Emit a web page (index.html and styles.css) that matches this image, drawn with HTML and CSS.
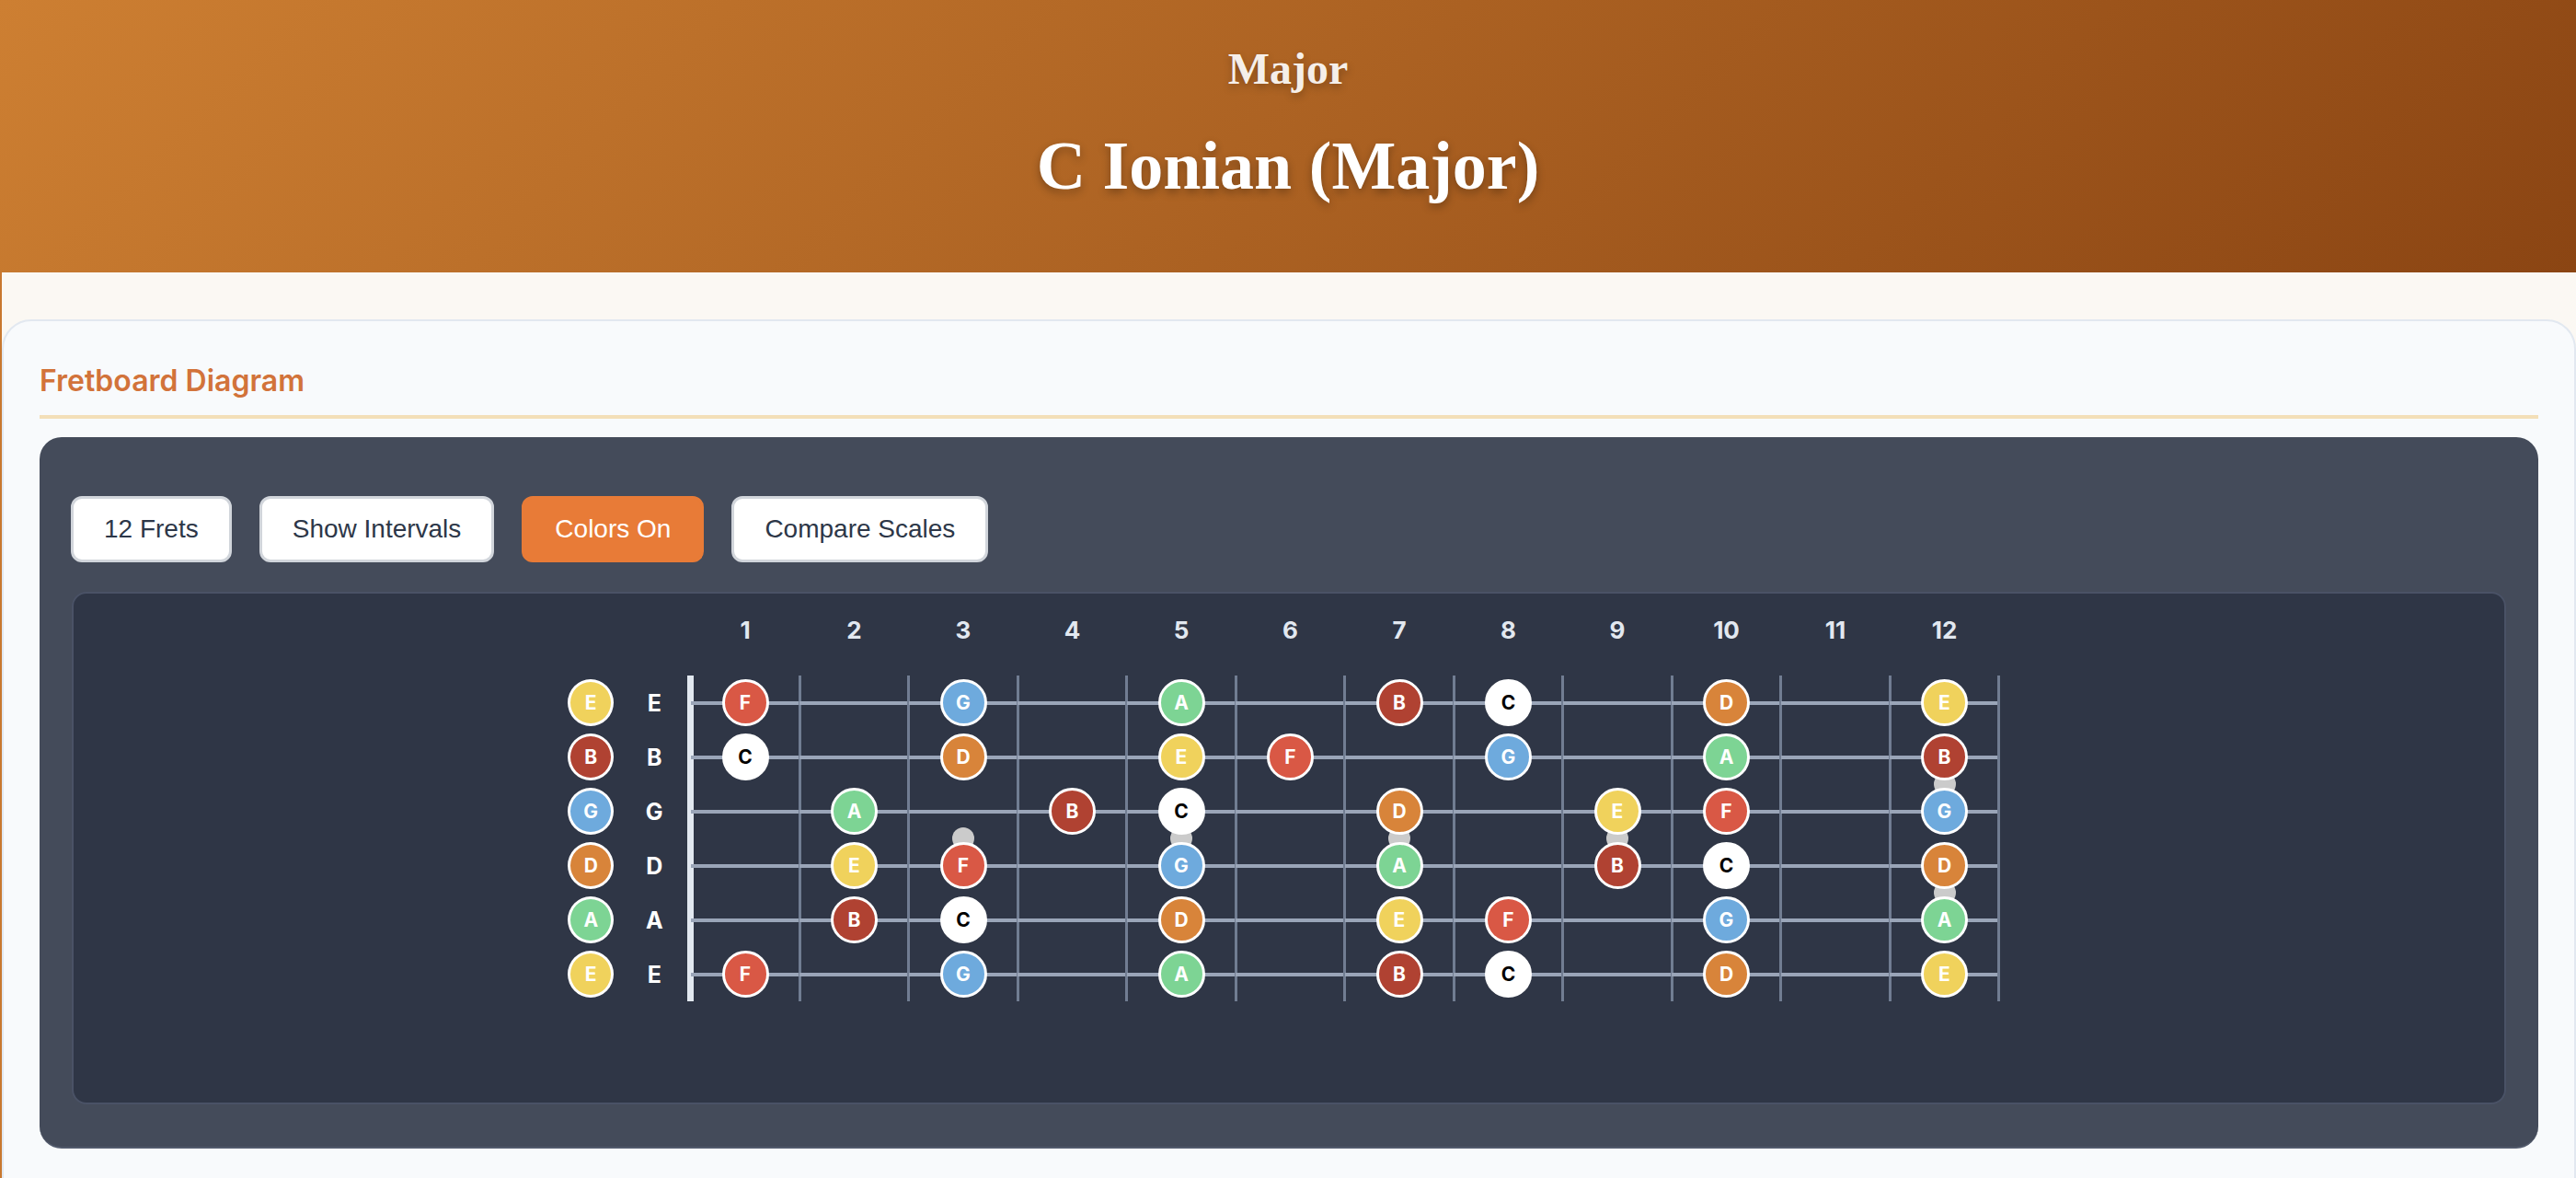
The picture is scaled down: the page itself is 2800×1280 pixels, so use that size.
FILE: index.html
```html
<!DOCTYPE html>
<html lang="en">
<head>
<meta charset="utf-8">
<title>C Ionian (Major)</title>
<link rel="stylesheet" href="styles.css">
</head>
<body>
<header class="hero">
  <div class="hero-sub">Major</div>
  <h1 class="hero-title">C Ionian (Major)</h1>
</header>
<main class="main">
  <section class="card">
    <h2 class="card-title">Fretboard Diagram</h2>
    <div class="panel">
      <div class="controls">
        <button class="btn">12 Frets</button>
        <button class="btn">Show Intervals</button>
        <button class="btn btn-active">Colors On</button>
        <button class="btn">Compare Scales</button>
      </div>
      <div class="board-wrap">
        <div class="fretboard">
          <div class="open-col">
            <div class="slot"><span class="note n-e">E</span></div>
            <div class="slot"><span class="note n-b">B</span></div>
            <div class="slot"><span class="note n-g">G</span></div>
            <div class="slot"><span class="note n-d">D</span></div>
            <div class="slot"><span class="note n-a">A</span></div>
            <div class="slot"><span class="note n-e">E</span></div>
          </div>
          <div class="label-col">
            <div class="slot">E</div>
            <div class="slot">B</div>
            <div class="slot">G</div>
            <div class="slot">D</div>
            <div class="slot">A</div>
            <div class="slot">E</div>
          </div>
          <div class="neck">
            <div class="fret-nums">
              <span>1</span><span>2</span><span>3</span><span>4</span><span>5</span><span>6</span>
              <span>7</span><span>8</span><span>9</span><span>10</span><span>11</span><span>12</span>
            </div>
            <div class="board">
              <!-- string 1: E -->
              <div class="cell"><span class="note n-f">F</span></div>
              <div class="cell"></div>
              <div class="cell"><span class="note n-g">G</span></div>
              <div class="cell"></div>
              <div class="cell"><span class="note n-a">A</span></div>
              <div class="cell"></div>
              <div class="cell"><span class="note n-b">B</span></div>
              <div class="cell"><span class="note n-c">C</span></div>
              <div class="cell"></div>
              <div class="cell"><span class="note n-d">D</span></div>
              <div class="cell"></div>
              <div class="cell"><span class="note n-e">E</span></div>
              <!-- string 2: B -->
              <div class="cell"><span class="note n-c">C</span></div>
              <div class="cell"></div>
              <div class="cell"><span class="note n-d">D</span></div>
              <div class="cell"></div>
              <div class="cell"><span class="note n-e">E</span></div>
              <div class="cell"><span class="note n-f">F</span></div>
              <div class="cell"></div>
              <div class="cell"><span class="note n-g">G</span></div>
              <div class="cell"></div>
              <div class="cell"><span class="note n-a">A</span></div>
              <div class="cell"></div>
              <div class="cell"><span class="note n-b">B</span><i class="dot"></i></div>
              <!-- string 3: G -->
              <div class="cell"></div>
              <div class="cell"><span class="note n-a">A</span></div>
              <div class="cell"><i class="dot"></i></div>
              <div class="cell"><span class="note n-b">B</span></div>
              <div class="cell"><span class="note n-c">C</span><i class="dot"></i></div>
              <div class="cell"></div>
              <div class="cell"><span class="note n-d">D</span><i class="dot"></i></div>
              <div class="cell"></div>
              <div class="cell"><span class="note n-e">E</span><i class="dot"></i></div>
              <div class="cell"><span class="note n-f">F</span></div>
              <div class="cell"></div>
              <div class="cell"><span class="note n-g">G</span></div>
              <!-- string 4: D -->
              <div class="cell"></div>
              <div class="cell"><span class="note n-e">E</span></div>
              <div class="cell"><span class="note n-f">F</span></div>
              <div class="cell"></div>
              <div class="cell"><span class="note n-g">G</span></div>
              <div class="cell"></div>
              <div class="cell"><span class="note n-a">A</span></div>
              <div class="cell"></div>
              <div class="cell"><span class="note n-b">B</span></div>
              <div class="cell"><span class="note n-c">C</span></div>
              <div class="cell"></div>
              <div class="cell"><span class="note n-d">D</span><i class="dot"></i></div>
              <!-- string 5: A -->
              <div class="cell"></div>
              <div class="cell"><span class="note n-b">B</span></div>
              <div class="cell"><span class="note n-c">C</span></div>
              <div class="cell"></div>
              <div class="cell"><span class="note n-d">D</span></div>
              <div class="cell"></div>
              <div class="cell"><span class="note n-e">E</span></div>
              <div class="cell"><span class="note n-f">F</span></div>
              <div class="cell"></div>
              <div class="cell"><span class="note n-g">G</span></div>
              <div class="cell"></div>
              <div class="cell"><span class="note n-a">A</span></div>
              <!-- string 6: E -->
              <div class="cell"><span class="note n-f">F</span></div>
              <div class="cell"></div>
              <div class="cell"><span class="note n-g">G</span></div>
              <div class="cell"></div>
              <div class="cell"><span class="note n-a">A</span></div>
              <div class="cell"></div>
              <div class="cell"><span class="note n-b">B</span></div>
              <div class="cell"><span class="note n-c">C</span></div>
              <div class="cell"></div>
              <div class="cell"><span class="note n-d">D</span></div>
              <div class="cell"></div>
              <div class="cell"><span class="note n-e">E</span></div>
            </div>
          </div>
        </div>
      </div>
    </div>
  </section>
</main>
</body>
</html>
```
FILE: styles.css
```css
html, body {
  margin: 0;
  padding: 0;
}
body {
  background: #fbf8f3;
  font-family: Inter, "Noto Sans", sans-serif;
  overflow: hidden;
}

/* Header */
.hero {
  background: linear-gradient(135deg, #cd7f32 0%, #8b4513 100%);
  padding: 46px 0 72px;
  text-align: center;
  color: #fff;
}
.hero-sub {
  font-family: "Liberation Serif", "DejaVu Serif", serif;
  font-weight: 700;
  font-size: 48px;
  line-height: 58px;
  color: rgba(255, 255, 255, 0.92);
  margin-bottom: 32px;
  text-shadow: 0 4px 8px rgba(0, 0, 0, 0.25);
}
.hero-title {
  margin: 0;
  font-family: "Liberation Serif", "DejaVu Serif", serif;
  font-weight: 700;
  font-size: 74px;
  line-height: 88px;
  color: #fff;
  text-shadow: 0 4px 10px rgba(0, 0, 0, 0.3);
}

/* Main */
.main {
  border-left: 2px solid #c8782f;
  padding-top: 51px;
  min-height: 1000px;
}
.card {
  background: #f8fafc;
  border: 2px solid #e2e8f0;
  border-radius: 32px;
  padding: 45px 39px 80px;
}
.card-title {
  margin: 0 0 20px;
  font-size: 32px;
  line-height: 40px;
  font-weight: 600;
  color: #d2733a;
  padding-bottom: 17px;
  border-bottom: 4px solid #f3dfb8;
}

/* Dark panel */
.panel {
  background: #444b5a;
  border-radius: 24px;
  border-bottom: 2px solid #525a6c;
  padding: 64px 35px 46px;
}
.controls {
  display: flex;
  gap: 30px;
  margin: 0 0 32px -1px;
}
.btn {
  box-sizing: border-box;
  height: 72px;
  padding: 0 33px;
  border: 3px solid #d1d5db;
  border-radius: 12px;
  background: #fff;
  color: #2d3748;
  font-family: "Liberation Sans", Arial, sans-serif;
  font-size: 28px;
  cursor: pointer;
}
.btn-active {
  background: #e87b37;
  border-color: #e87b37;
  color: #fff;
}

/* Fretboard */
.board-wrap {
  background: #2f3646;
  border: 2px solid #4a5266;
  border-radius: 16px;
  display: flex;
  justify-content: center;
  padding: 20px 12px 110px 0;
}
.fretboard {
  display: flex;
}
.open-col,
.label-col {
  display: flex;
  flex-direction: column;
  padding-top: 69px;
  width: 50px;
}
.label-col {
  margin: 0 14.5px 0 19px;
  color: #fff;
  font-weight: 700;
  font-size: 25px;
}
.slot {
  height: 59px;
  display: flex;
  align-items: center;
  justify-content: center;
}
.fret-nums {
  display: grid;
  grid-template-columns: repeat(12, 118.5px);
  height: 40px;
  line-height: 40px;
  margin-bottom: 29px;
  text-align: center;
  color: #e2e8f0;
  font-weight: 700;
  font-size: 26px;
}
.board {
  position: relative;
  display: grid;
  grid-template-columns: repeat(12, 118.5px);
  grid-template-rows: repeat(6, 59px);
}
.board::before {
  content: "";
  position: absolute;
  left: -3.5px;
  top: 0;
  bottom: 0;
  width: 7px;
  background: #e2e8f0;
  z-index: 0;
}
.cell {
  position: relative;
  display: flex;
  align-items: center;
  justify-content: center;
}
.cell::before {
  content: "";
  position: absolute;
  left: 0;
  right: 0;
  top: 50%;
  height: 4px;
  margin-top: -2px;
  background: #9aa5b8;
  z-index: 1;
}
.cell::after {
  content: "";
  position: absolute;
  top: 0;
  bottom: 0;
  right: -1.5px;
  width: 3px;
  background: #717d92;
  z-index: 1;
}
.dot {
  position: absolute;
  left: 50%;
  bottom: -12px;
  width: 24px;
  height: 24px;
  margin-left: -12px;
  border-radius: 50%;
  background: #cbcbcb;
  z-index: 2;
}
.note {
  position: relative;
  z-index: 3;
  box-sizing: border-box;
  width: 51px;
  height: 51px;
  border-radius: 50%;
  border: 3px solid #fff;
  display: flex;
  align-items: center;
  justify-content: center;
  color: #fff;
  font-weight: 700;
  font-size: 21px;
  font-family: Inter, "Noto Sans", sans-serif;
}
.n-c { background: #ffffff; color: #000; }
.n-d { background: #d8843a; }
.n-e { background: #f0d25c; }
.n-f { background: #d95845; }
.n-g { background: #6eaadd; }
.n-a { background: #7dd494; }
.n-b { background: #b04232; }
```
